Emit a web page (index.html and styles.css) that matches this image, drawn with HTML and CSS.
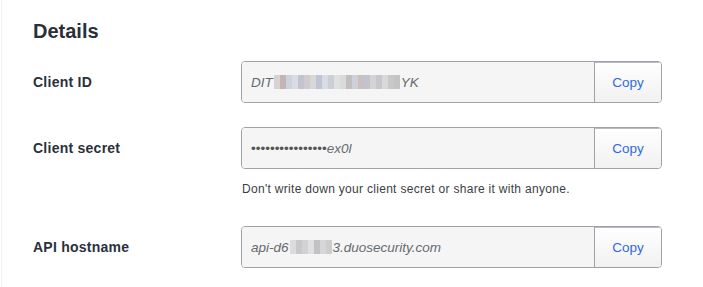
FILE: index.html
```html
<!DOCTYPE html>
<html>
<head>
<meta charset="utf-8">
<link rel="stylesheet" href="styles.css">
</head>
<body>
<div class="panel">
  <h2 class="title">Details</h2>

  <div class="row">
    <div class="label">Client ID</div>
    <div class="group">
      <div class="field"><span>DIT</span><span class="blur b1"><i style="background:#d6d2d6"></i><i style="background:#c4b4b4"></i><i style="background:#cdd3dc"></i><i style="background:#d9dde3"></i><i style="background:#c2c3cf"></i><i style="background:#cfcbcf"></i><i style="background:#d8d8d8"></i><i style="background:#c1c4d3"></i><i style="background:#d6dde6"></i><i style="background:#ccd0d6"></i><i style="background:#e0e0e0"></i><i style="background:#dadada"></i><i style="background:#c2bec1"></i><i style="background:#d0d0da"></i><i style="background:#c9c0c3"></i><i style="background:#c4c2cc"></i><i style="background:#d4d4d4"></i><i style="background:#cac6cd"></i><i style="background:#d9d9d9"></i><i style="background:#c9c9c9"></i><i style="background:#c4c4c7"></i></span><span>YK</span></div>
      <button class="copy">Copy</button>
    </div>
  </div>

  <div class="row">
    <div class="label">Client secret</div>
    <div class="group">
      <div class="field"><span class="dots">••••••••••••••••</span><span>ex0l</span></div>
      <button class="copy">Copy</button>
    </div>
  </div>
  <p class="help">Don't write down your client secret or share it with anyone.</p>

  <div class="row row-last">
    <div class="label">API hostname</div>
    <div class="group">
      <div class="field"><span>api-d6</span><span class="blur b2"><i style="background:#dcdcde"></i><i style="background:#c8c8cb"></i><i style="background:#d2d2d5"></i><i style="background:#e0e0e2"></i><i style="background:#c2c2c5"></i><i style="background:#d6d6d8"></i><i style="background:#cdcdd0"></i></span><span>3.duosecurity.com</span></div>
      <button class="copy">Copy</button>
    </div>
  </div>
</div>
</body>
</html>
```

FILE: styles.css
```css
html, body {
  margin: 0;
  padding: 0;
  background: #ffffff;
}

body {
  font-family: "Liberation Sans", Arial, sans-serif;
  color: #2c323a;
}

.panel {
  margin-left: 1px;
  border-left: 1px solid #f0f0f0;
  padding: 20px 0 20px 31px;
  min-height: 247px;
}

.title {
  margin: 0;
  font-size: 20px;
  line-height: 23px;
  font-weight: bold;
  color: #2b3038;
}

.row {
  display: grid;
  grid-template-columns: 208px 421px;
  align-items: center;
  margin-top: 24px;
}

.title + .row {
  margin-top: 18px;
}

.row-last {
  margin-top: 30px;
}

.label {
  font-size: 14px;
  font-weight: bold;
  letter-spacing: 0.25px;
  color: #2a313b;
}

.group {
  display: flex;
  height: 42px;
  box-sizing: border-box;
  border: 1px solid #9da2a8;
  border-radius: 4px;
  overflow: hidden;
}

.field {
  flex: 1;
  display: flex;
  align-items: center;
  padding-left: 9px;
  background: #f5f5f5;
  font-size: 13.5px;
  font-style: italic;
  color: #666a70;
  white-space: nowrap;
}

.dots {
  font-style: normal;
  color: #555;
}

.blur {
  display: inline-flex;
  height: 14px;
  margin: 0 1px;
}

.blur i {
  display: block;
  width: 6px;
  height: 14px;
}

.copy {
  width: 67px;
  border: 0;
  border-left: 1px solid #9da2a8;
  box-shadow: inset 0 1px 0 #b8bcc0;
  background: linear-gradient(#ffffff, #f1f1f2);
  font-family: "Liberation Sans", Arial, sans-serif;
  font-size: 13.5px;
  color: #2f6be0;
  padding: 0;
  cursor: pointer;
}

.help {
  margin: 13px 0 0 209px;
  font-size: 12px;
  line-height: 14px;
  letter-spacing: 0.3px;
  color: #3a3e44;
}
```
